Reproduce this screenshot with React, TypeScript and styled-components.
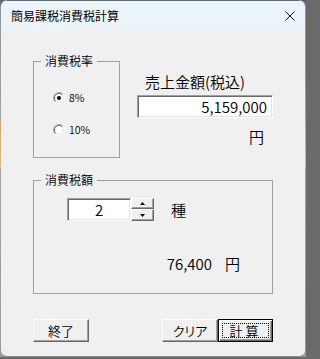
import React from 'react';
import styled, { createGlobalStyle } from 'styled-components';

const GlobalStyle = createGlobalStyle`
  html, body {
    margin: 0;
    padding: 0;
  }
  html {
    background: #6a6a6a;
  }
  body {
    font-family: "Noto Sans CJK JP", "Noto Sans", sans-serif;
    font-weight: 350;
    color: #000;
  }
  * {
    box-sizing: border-box;
  }
`;

// desktop behind the dialog; the 1px side strips show the window edge colours
const Desktop = styled.div`
  width: 306px;
  height: 359px;
  padding: 0 1px 2px 1px;
  background: linear-gradient(
    to bottom,
    #56636d 0,
    #8d969c 8px,
    #9ea4a8 120px,
    #d9a35e 120px,
    #e8b878 168px,
    #a4a4a4 168px,
    #9a9a9a 357px,
    #6a6a6a 357px
  );
`;

const Window = styled.div`
  width: 304px;
  height: 357px;
  display: flex;
  flex-direction: column;
  border-radius: 7px 7px 6px 6px;
  overflow: hidden;
  background: #f0f0f0;
  border-bottom: 1px solid #8a8a8a;
`;

const TitleBar = styled.div`
  height: 30px;
  flex: none;
  display: flex;
  align-items: center;
  justify-content: space-between;
  padding: 1px 10px 0 10px;
  background: #ebf4f8;
  border-top: 1px solid #5f6b74;
  font-size: 12px;
  font-weight: 400;
  line-height: 14px;
`;

const CloseIcon = () => (
  <svg width="10" height="10" viewBox="0 0 10 10">
    <path d="M0.5 0.5 L9.5 9.5 M9.5 0.5 L0.5 9.5" stroke="#1a1a1a" strokeWidth="1" fill="none" />
  </svg>
);

const Body = styled.div`
  flex: 1;
  display: flex;
  flex-direction: column;
  padding: 24px 32px 0 32px;
`;

const TopRow = styled.div`
  display: flex;
  align-items: flex-start;
`;

// group box: a bordered frame whose caption sits on the top edge
const Group = styled.div<{ $width?: number; $top: number; $pad: string }>`
  display: flex;
  flex-direction: column;
  width: ${p => (p.$width ? `${p.$width}px` : 'auto')};
  margin-top: ${p => p.$top}px;
  padding: ${p => p.$pad};
  border: 1px solid #a0a0a0;
`;

const Caption = styled.div`
  align-self: flex-start;
  margin-top: -8px;
  padding: 0 4px;
  font-size: 12px;
  line-height: 14px;
  background: #f0f0f0;
`;

const RadioRow = styled.label<{ $gap: number }>`
  display: flex;
  align-items: center;
  gap: 4px;
  height: 14px;
  margin-top: ${p => p.$gap}px;
  padding-left: 12px;
  font-size: 10.5px;
  line-height: 14px;
`;

const Radio = ({ checked }: { checked?: boolean }) => (
  <svg width="12" height="12" viewBox="0 0 12 12">
    <circle cx="6" cy="6" r="5.5" fill="#fff" />
    <path d="M2.1 9.9 A5.5 5.5 0 0 1 9.9 2.1" fill="none" stroke="#a0a0a0" />
    <path d="M2.8 9.2 A4.5 4.5 0 0 1 9.2 2.8" fill="none" stroke="#696969" />
    <path d="M9.9 2.1 A5.5 5.5 0 0 1 2.1 9.9" fill="none" stroke="#ffffff" />
    <path d="M9.2 2.8 A4.5 4.5 0 0 1 2.8 9.2" fill="none" stroke="#e3e3e3" />
    {checked && <circle cx="6" cy="6" r="2" fill="#000" />}
  </svg>
);

const AmountColumn = styled.div`
  margin-left: auto;
  width: 136px;
  display: flex;
  flex-direction: column;
  padding-top: 19px;
`;

const BigLabel = styled.div`
  font-size: 15px;
  line-height: 18px;
  white-space: nowrap;
`;

const SalesLabel = styled(BigLabel)`
  padding-left: 8px;
`;

const YenUnder = styled(BigLabel)`
  align-self: flex-end;
  margin: 10px 9px 0 0;
`;

// classic sunken edit box
const Field = styled.div<{ $width: number; $align: string; $padRight?: number }>`
  width: ${p => p.$width}px;
  height: 23px;
  background: #fff;
  border: 1px solid;
  border-color: #a0a0a0 #fff #fff #a0a0a0;
  box-shadow: inset 1px 1px 0 #696969, inset -1px -1px 0 #e3e3e3;
  font-size: 15px;
  line-height: 21px;
  text-align: ${p => p.$align};
  padding-right: ${p => p.$padRight ?? 0}px;
`;

const SalesField = styled(Field)`
  margin-top: 4px;
`;

const SpinRow = styled.div`
  display: flex;
  align-items: center;
  margin-top: 11px;
  padding-left: 26px;
`;

const SpinButtons = styled.div`
  display: flex;
  flex-direction: column;
  width: 23px;
  height: 23px;
`;

const SpinButton = styled.div<{ $h: number }>`
  height: ${p => p.$h}px;
  display: flex;
  align-items: center;
  justify-content: center;
  background: #f0f0f0;
  border: 1px solid;
  border-color: #fff #696969 #696969 #fff;
  box-shadow: inset -1px -1px 0 #a0a0a0;
`;

const Arrow = ({ up }: { up?: boolean }) => (
  <svg width="5" height="3" viewBox="0 0 5 3">
    <path d={up ? 'M2.5 0 L5 3 L0 3 Z' : 'M0 0 L5 0 L2.5 3 Z'} fill="#000" />
  </svg>
);

const Kind = styled(BigLabel)`
  margin-left: 17px;
`;

const ResultRow = styled.div`
  display: flex;
  justify-content: flex-end;
  gap: 13px;
  margin-top: 34px;
`;

const ButtonRow = styled.div`
  display: flex;
  justify-content: space-between;
  margin-top: 25px;
`;

const ButtonPair = styled.div`
  display: flex;
`;

const Button = styled.div<{ $width: number; $default?: boolean; $tracking?: number }>`
  position: relative;
  width: ${p => p.$width}px;
  height: 23px;
  display: flex;
  align-items: center;
  justify-content: center;
  background: #f0f0f0;
  font-size: 13px;
  line-height: 16px;
  letter-spacing: ${p => p.$tracking ?? 0}px;
  font-feature-settings: "palt";
  border: 1px solid;
  border-color: ${p => (p.$default ? '#000' : '#fff #696969 #696969 #fff')};
  box-shadow: ${p =>
    p.$default
      ? 'inset 1px 1px 0 #fff, inset -1px -1px 0 #696969, inset -2px -2px 0 #a0a0a0'
      : 'inset -1px -1px 0 #a0a0a0'};

  &::after {
    content: '';
    display: ${p => (p.$default ? 'block' : 'none')};
    position: absolute;
    inset: 3px;
    border: 1px dotted #000;
  }
`;

export default function App() {
  return (
    <>
      <GlobalStyle />
      <Desktop>
        <Window>
          <TitleBar>
            <span>簡易課税消費税計算</span>
            <CloseIcon />
          </TitleBar>
          <Body>
            <TopRow>
              <Group $width={87} $top={7} $pad="0 0 20px 7px">
                <Caption>消費税率</Caption>
                <RadioRow $gap={23}>
                  <Radio checked />
                  8%
                </RadioRow>
                <RadioRow $gap={18}>
                  <Radio />
                  10%
                </RadioRow>
              </Group>
              <AmountColumn>
                <SalesLabel>売上金額(税込)</SalesLabel>
                <SalesField $width={136} $align="right" $padRight={5}>
                  5,159,000
                </SalesField>
                <YenUnder>円</YenUnder>
              </AmountColumn>
            </TopRow>

            <Group $top={22} $pad="0 32px 20px 7px">
              <Caption>消費税額</Caption>
              <SpinRow>
                <Field $width={64} $align="center">2</Field>
                <SpinButtons>
                  <SpinButton $h={11}>
                    <Arrow up />
                  </SpinButton>
                  <SpinButton $h={12}>
                    <Arrow />
                  </SpinButton>
                </SpinButtons>
                <Kind>種</Kind>
              </SpinRow>
              <ResultRow>
                <BigLabel>76,400</BigLabel>
                <BigLabel>円</BigLabel>
              </ResultRow>
            </Group>

            <ButtonRow>
              <Button $width={56}>終了</Button>
              <ButtonPair>
                <Button $width={56}>クリア</Button>
                <Button $width={55} $default $tracking={3}>
                  計算
                </Button>
              </ButtonPair>
            </ButtonRow>
          </Body>
        </Window>
      </Desktop>
    </>
  );
}
